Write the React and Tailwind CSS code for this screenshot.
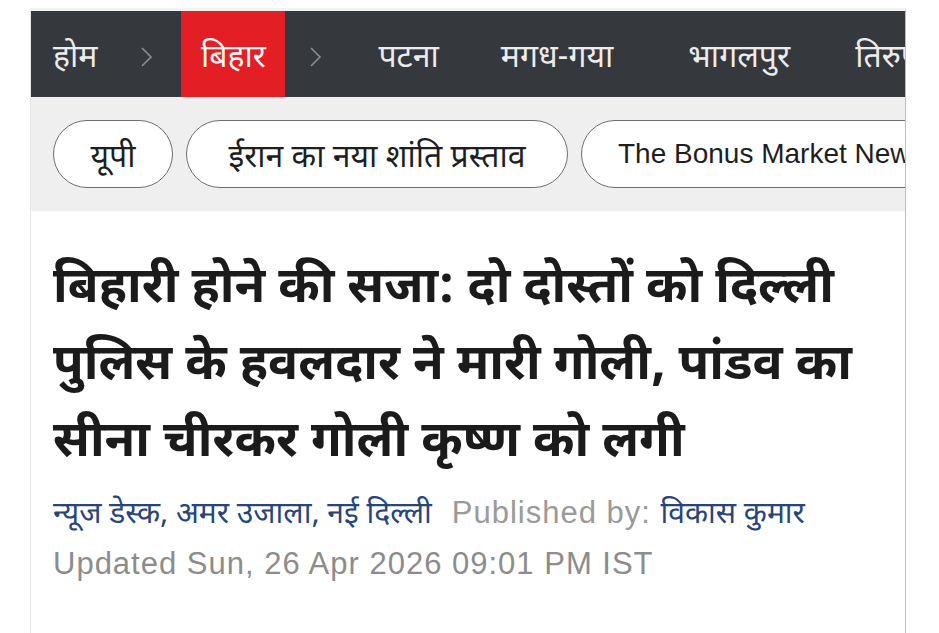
export default function App() {
  const hindi = { fontFamily: '"Noto Sans Devanagari", "Noto Sans", "Lohit Devanagari", sans-serif' };
  const arial = { fontFamily: '"Liberation Sans", Arial, sans-serif' };

  const Chevron = ({ className }) => (
    <svg className={className} width="13" height="22" viewBox="0 0 13 22" fill="none">
      <polyline points="2,2 11,11 2,20" stroke="#8c8e91" strokeWidth="1.6" />
    </svg>
  );

  return (
    <div className="min-h-screen bg-white pt-[8px]">
      <div className="ml-[30px] w-[876px] min-h-[625px] border-l border-r border-l-[#e6e6e6] border-r-[#bdbdbd] border-t-[3px] border-t-[#f3f3f3]">
        {/* top nav */}
        <nav
          className="h-[86px] bg-[#35383c] flex items-center overflow-hidden whitespace-nowrap text-[32px] text-[#ececec]"
          style={hindi}
        >
          <span className="pl-[22px] pt-[10px]">होम</span>
          <Chevron className="ml-[43px] mt-[6px] shrink-0" />
          <span className="ml-[28px] h-full w-[104px] shrink-0 bg-[#e31e24] flex items-center justify-center pt-[10px] text-[#f7f7f7]">
            बिहार
          </span>
          <Chevron className="ml-[24px] mt-[6px] shrink-0" />
          <span className="ml-[56px] pt-[10px]">पटना</span>
          <span className="ml-[62px] pt-[10px]">मगध-गया</span>
          <span className="ml-[75px] pt-[10px]">भागलपुर</span>
          <span className="ml-[65px] pt-[10px]">तिरुपति</span>
        </nav>

        {/* topic pills */}
        <div className="h-[114px] bg-[#efefef] flex items-center gap-[13px] pl-[22px] overflow-hidden whitespace-nowrap">
          <div
            className="h-[68px] w-[120px] shrink-0 rounded-full border-[1.5px] border-[#6e6e6e] bg-white flex items-center justify-center pt-[10px] text-[32px] text-[#1e1e1e]"
            style={hindi}
          >
            यूपी
          </div>
          <div
            className="h-[68px] w-[382px] shrink-0 rounded-full border-[1.5px] border-[#6e6e6e] bg-white flex items-center justify-center pt-[10px] text-[32px] text-[#1e1e1e]"
            style={hindi}
          >
            ईरान का नया शांति प्रस्ताव
          </div>
          <div
            className="h-[68px] shrink-0 rounded-full border-[1.5px] border-[#6e6e6e] bg-white flex items-center pl-[36px] pr-[36px] text-[28px] text-[#1e1e1e]"
            style={arial}
          >
            The Bonus Market News
          </div>
        </div>

        {/* article head */}
        <div className="px-[22px] pt-[40px]">
          <h1 className="text-[50px] leading-[77px] font-bold text-[#1b1b1b] whitespace-nowrap" style={hindi}>
            बिहारी होने की सजा: दो दोस्तों को दिल्ली<br />
            पुलिस के हवलदार ने मारी गोली, पांडव का<br />
            सीना चीरकर गोली कृष्ण को लगी
          </h1>
          <div className="mt-[10px] text-[30px] leading-[40px] whitespace-nowrap">
            <span className="text-[#27457a]" style={hindi}>न्यूज डेस्क, अमर उजाला, नई दिल्ली</span>
            <span className="ml-[20px] text-[#9a9a9a] text-[31px] tracking-[1px]" style={arial}>Published by: </span>
            <span className="text-[#27457a]" style={hindi}>विकास कुमार</span>
          </div>
          <div className="mt-[8px] text-[31px] leading-[40px] tracking-[1px] text-[#8c8c8c]" style={arial}>
            Updated Sun, 26 Apr 2026 09:01 PM IST
          </div>
        </div>
      </div>
    </div>
  );
}
